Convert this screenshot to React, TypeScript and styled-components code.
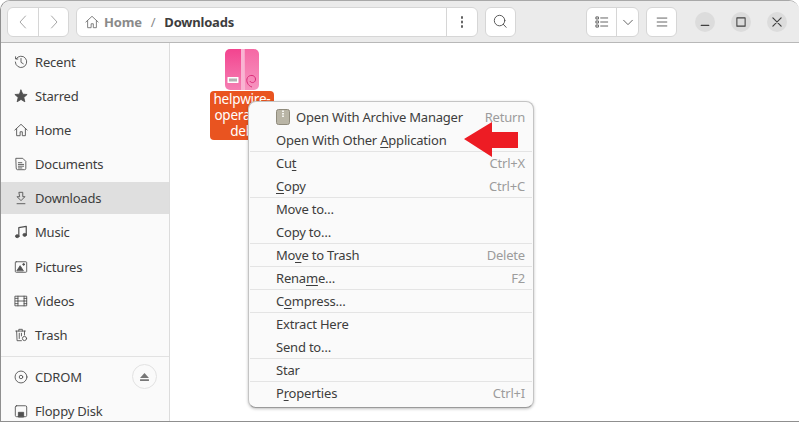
import React from 'react';
import styled, { createGlobalStyle } from 'styled-components';

const GlobalStyle = createGlobalStyle`
  html, body {
    margin: 0;
    padding: 0;
    background: #fff;
    overflow: hidden;
  }
  * {
    box-sizing: border-box;
  }
`;

const stroke = { fill: 'none', stroke: 'currentColor', strokeWidth: 1, strokeLinecap: 'round', strokeLinejoin: 'round' } as const;

const Icon = ({ size = 16, children }: { size?: number; children: React.ReactNode }) => (
  <svg width={size} height={size} viewBox="0 0 16 16" {...stroke}>
    {children}
  </svg>
);

const HomeIcon = () => (
  <Icon size={14}>
    <path d="M1 8 8 1.5 15 8M3 6.5V14.5H7V10H9.5V14.5H13V6.5" />
  </Icon>
);

const icons: Record<string, React.ReactNode> = {
  recent: (
    <Icon size={14}>
      <path d="M2.6 4.2A6.5 6.5 0 1 1 1.5 8M1.8 2v2.6h2.6M8 4v4.4l2.6 1.6" />
    </Icon>
  ),
  star: (
    <Icon size={14}>
      <path d="M8 1.2 10 5.9 15 6.3 11.2 9.6 12.4 14.6 8 11.9 3.6 14.6 4.8 9.6 1 6.3 6 5.9Z" fill="currentColor" />
    </Icon>
  ),
  home: <HomeIcon />,
  documents: (
    <Icon size={14}>
      <path d="M2.5 1.5H10L13.5 5V13A1.5 1.5 0 0 1 12 14.5H4A1.5 1.5 0 0 1 2.5 13ZM5 6.5H9M5 8.5H11M5 10.5H11M5 12.5H9" />
    </Icon>
  ),
  downloads: (
    <Icon size={14}>
      <path d="M6 1.5H10V6.5H12.5L8 11 3.5 6.5H6ZM3.5 14.5H12.5" />
    </Icon>
  ),
  music: (
    <Icon size={14}>
      <path d="M5.5 12.5V3L14 1.5V11" strokeWidth={1.4} />
      <ellipse cx="3.7" cy="12.8" rx="2" ry="1.7" fill="currentColor" />
      <ellipse cx="12.2" cy="11.3" rx="2" ry="1.7" fill="currentColor" />
    </Icon>
  ),
  pictures: (
    <Icon size={14}>
      <rect x="1.5" y="2" width="13" height="12" rx="1" />
      <path d="M3.5 12 7 6.5 10.5 12Z" fill="currentColor" />
      <circle cx="11" cy="5" r="1" fill="currentColor" />
    </Icon>
  ),
  videos: (
    <Icon size={14}>
      <rect x="1.5" y="2.5" width="13" height="11" />
      <path d="M4.5 2.5V13.5M11.5 2.5V13.5M4.5 8H11.5M1.5 5H4.5M1.5 8H4.5M1.5 11H4.5M11.5 5H14.5M11.5 8H14.5M11.5 11H14.5" />
    </Icon>
  ),
  trash: (
    <Icon size={14}>
      <path d="M2 3.5H13M5.5 3.5V1.5H9.5V3.5M3 3.5 3.5 14.5H8.5M12 3.5V8M6 6V12M8.5 6V9" />
      <circle cx="12" cy="12" r="2.4" />
    </Icon>
  ),
  cdrom: (
    <Icon size={14}>
      <circle cx="8" cy="8" r="6.8" />
      <circle cx="8" cy="8" r="2" />
    </Icon>
  ),
  floppy: (
    <Icon size={14}>
      <path d="M3 2H13A1.5 1.5 0 0 1 14.5 3.5V13A1.5 1.5 0 0 1 13 14.5H3A1.5 1.5 0 0 1 1.5 13V3.5A1.5 1.5 0 0 1 3 2Z" />
      <path d="M5 14.5V9.5H11V14.5Z" fill="currentColor" />
    </Icon>
  ),
};

const places = [
  { key: 'recent', label: 'Recent' },
  { key: 'star', label: 'Starred' },
  { key: 'home', label: 'Home' },
  { key: 'documents', label: 'Documents' },
  { key: 'downloads', label: 'Downloads', active: true },
  { key: 'music', label: 'Music' },
  { key: 'pictures', label: 'Pictures' },
  { key: 'videos', label: 'Videos' },
  { key: 'trash', label: 'Trash' },
];

type MenuEntry = { label: React.ReactNode; hint?: string; sep?: boolean; icon?: boolean };

const menu: MenuEntry[] = [
  { label: 'Open With Archive Manager', hint: 'Return', icon: true },
  { label: <>Open With Other <u>A</u>pplication</> },
  { label: <>Cu<u>t</u></>, hint: 'Ctrl+X', sep: true },
  { label: <><u>C</u>opy</>, hint: 'Ctrl+C' },
  { label: 'Move to…', sep: true },
  { label: 'Copy to…' },
  { label: <>Mo<u>v</u>e to Trash</>, hint: 'Delete', sep: true },
  { label: <>Rena<u>m</u>e…</>, hint: 'F2', sep: true },
  { label: <>C<u>o</u>mpress…</>, sep: true },
  { label: 'Extract Here', sep: true },
  { label: 'Send to…' },
  { label: 'Star', sep: true },
  { label: <>P<u>r</u>operties</>, hint: 'Ctrl+I', sep: true },
];

export default function App() {
  return (
    <Window>
      <GlobalStyle />
      <HeaderBar>
        <ButtonGroup>
          <ToolButton $width={30} $muted>
            <Icon>
              <path d="M10.5 2 5 8 10.5 14" />
            </Icon>
          </ToolButton>
          <ToolButton $width={30} $muted>
            <Icon>
              <path d="M5.5 2 11 8 5.5 14" />
            </Icon>
          </ToolButton>
        </ButtonGroup>
        <PathBar>
          <Crumbs>
            <CrumbIcon>
              <HomeIcon />
            </CrumbIcon>
            <Crumb>Home</Crumb>
            <CrumbSlash>/</CrumbSlash>
            <Crumb $current>Downloads</Crumb>
          </Crumbs>
          <ToolButton $width={30}>
            <Icon>
              <path d="M8 3V4M8 7.5V8.5M8 12V13" strokeWidth={1.8} />
            </Icon>
          </ToolButton>
        </PathBar>
        <ButtonGroup>
          <ToolButton $width={29}>
            <Icon size={15}>
              <circle cx="7" cy="7" r="5.6" />
              <path d="M11 11 14 14.2" />
            </Icon>
          </ToolButton>
        </ButtonGroup>
        <Spacer />
        <ButtonGroup>
          <ToolButton $width={29}>
            <Icon size={14}>
              <rect x="1.5" y="2.2" width="2.4" height="2.4" />
              <rect x="1.5" y="6.8" width="2.4" height="2.4" />
              <rect x="1.5" y="11.4" width="2.4" height="2.4" />
              <path d="M6.5 3.4H14.5M6.5 8H14.5M6.5 12.6H14.5" />
            </Icon>
          </ToolButton>
          <ToolButton $width={22}>
            <Icon size={14}>
              <path d="M3 6 8 11 13 6" />
            </Icon>
          </ToolButton>
        </ButtonGroup>
        <ButtonGroup>
          <ToolButton $width={29}>
            <Icon size={14}>
              <path d="M2.5 3.5H13.5M2.5 8H13.5M2.5 12.5H13.5" />
            </Icon>
          </ToolButton>
        </ButtonGroup>
        <WindowControls>
          <WindowButton>
            <Icon size={12}>
              <path d="M3 12.5H13" strokeWidth={1.6} />
            </Icon>
          </WindowButton>
          <WindowButton>
            <Icon size={12}>
              <rect x="2.5" y="2.5" width="11" height="11" strokeWidth={1.4} />
            </Icon>
          </WindowButton>
          <WindowButton>
            <Icon size={12}>
              <path d="M2.5 2.5 13.5 13.5M13.5 2.5 2.5 13.5" strokeWidth={1.6} />
            </Icon>
          </WindowButton>
        </WindowControls>
      </HeaderBar>

      <Body>
        <Sidebar>
          <PlaceList>
            {places.map((place) => (
              <PlaceRow key={place.key} $active={place.active}>
                <PlaceIcon>{icons[place.key]}</PlaceIcon>
                {place.label}
              </PlaceRow>
            ))}
          </PlaceList>
          <SideDivider />
          <PlaceList>
            <PlaceRow>
              <PlaceIcon>{icons.cdrom}</PlaceIcon>
              CDROM
              <EjectButton>
                <svg width="9" height="8" viewBox="0 0 10 9">
                  <path d="M5 0 10 5.5H0ZM0 7H10V9H0Z" fill="currentColor" />
                </svg>
              </EjectButton>
            </PlaceRow>
            <PlaceRow>
              <PlaceIcon>{icons.floppy}</PlaceIcon>
              Floppy Disk
            </PlaceRow>
          </PlaceList>
        </Sidebar>

        <Files>
          <FileItem>
            <svg width="34" height="41" viewBox="0 0 34 41">
              <defs>
                <linearGradient id="pkgLeft" x1="0" y1="0" x2="0" y2="1">
                  <stop offset="0" stopColor="#f3448f" />
                  <stop offset="1" stopColor="#f57fb3" />
                </linearGradient>
                <linearGradient id="pkgRight" x1="0" y1="0" x2="0" y2="1">
                  <stop offset="0" stopColor="#f568a4" />
                  <stop offset="1" stopColor="#f795c0" />
                </linearGradient>
                <clipPath id="pkgShape">
                  <rect width="34" height="41" rx="5" />
                </clipPath>
              </defs>
              <g clipPath="url(#pkgShape)">
                <rect width="16" height="41" fill="url(#pkgLeft)" />
                <rect x="16" width="3.5" height="41" fill="#f9b4d2" />
                <rect x="19.5" width="14.5" height="41" fill="url(#pkgRight)" />
              </g>
              <rect x="2.5" y="28" width="11" height="6" rx="0.5" fill="#fff" />
              <path d="M5 29.5V32.5M7 29.5V32.5M9 29.5V32.5M11 29.5V32.5" stroke="#666" strokeWidth="1" />
              <path d="M27 38C23 37 20.5 32 22.5 28.5 24.5 25.5 30 25.5 30.5 30 30.8 33.5 26.5 35 24.8 32" fill="none" stroke="#d92c78" strokeWidth="1" />
            </svg>
            <FileLabel>
              helpwire-
              <br />
              operator.
              <br />
              deb
            </FileLabel>
          </FileItem>
        </Files>
      </Body>

      <ContextMenu>
        {menu.map((entry, i) => (
          <MenuRow key={i} $sep={entry.sep}>
            {entry.icon && (
              <MenuIcon>
                <svg width="14" height="16" viewBox="0 0 14 16">
                  <rect x="0.5" y="0.5" width="13" height="15" rx="2" fill="#b9b5a6" stroke="#8f8b7c" />
                  <path d="M7 1.5V8" stroke="#f4f3ee" strokeWidth="2" strokeDasharray="1.5 1" />
                </svg>
              </MenuIcon>
            )}
            <span>{entry.label}</span>
            {entry.hint && <MenuHint>{entry.hint}</MenuHint>}
          </MenuRow>
        ))}
      </ContextMenu>

      <RedArrow width="56" height="37" viewBox="0 0 56 37">
        <path d="M0 18 28 1V11H54V27H28V36Z" fill="#ed1c24" />
      </RedArrow>
    </Window>
  );
}

const Window = styled.div`
  position: relative;
  width: 799px;
  height: 422px;
  display: flex;
  flex-direction: column;
  border-top: 1px solid #a8a8a8;
  border-left: 1px solid #8f8f8f;
  border-bottom: 1px solid #8f8f8f;
  border-top-left-radius: 10px;
  border-top-right-radius: 10px;
  overflow: hidden;
  font-family: 'Noto Sans', 'Open Sans', sans-serif;
  font-size: 13px;
  letter-spacing: -0.2px;
  color: #3d3d3d;
  background: #fff;
`;

const HeaderBar = styled.header`
  flex: none;
  height: 42px;
  display: flex;
  align-items: center;
  gap: 7px;
  padding: 0 12px 0 6px;
  background: #ebebeb;
  border-bottom: 1px solid #b8b8b8;
`;

const ButtonGroup = styled.div`
  flex: none;
  height: 30px;
  display: flex;
  background: #fff;
  border: 1px solid #d6d6d6;
  border-radius: 6px;
  overflow: hidden;
`;

const ToolButton = styled.div<{ $width: number; $muted?: boolean }>`
  width: ${(p) => p.$width}px;
  display: flex;
  align-items: center;
  justify-content: center;
  color: ${(p) => (p.$muted ? '#a6a6a6' : '#505050')};
  & + & {
    border-left: 1px solid #d6d6d6;
  }
`;

const PathBar = styled(ButtonGroup)`
  width: 402px;
`;

const Crumbs = styled.div`
  flex: 1;
  display: flex;
  align-items: center;
  padding-left: 8px;
  border-right: 1px solid #d6d6d6;
  font-weight: 700;
`;

const CrumbIcon = styled.span`
  display: flex;
  color: #707070;
  margin-right: 5px;
`;

const Crumb = styled.span<{ $current?: boolean }>`
  color: ${(p) => (p.$current ? '#3d3d3d' : '#8a8a8a')};
`;

const CrumbSlash = styled.span`
  color: #8a8a8a;
  font-weight: 400;
  margin: 0 9px;
`;

const Spacer = styled.div`
  flex: 1;
`;

const WindowControls = styled.div`
  display: flex;
  gap: 16px;
  margin-left: 11px;
`;

const WindowButton = styled.div`
  width: 20px;
  height: 20px;
  display: flex;
  align-items: center;
  justify-content: center;
  border-radius: 50%;
  background: #dcdcdc;
  color: #404040;
`;

const Body = styled.div`
  flex: 1;
  min-height: 0;
  display: flex;
`;

const Sidebar = styled.nav`
  flex: none;
  width: 169px;
  padding-top: 3px;
  background: #fafafa;
  border-right: 1px solid #dcdcdc;
`;

const PlaceList = styled.div`
  display: flex;
  flex-direction: column;
  gap: 2.1px;
`;

const PlaceRow = styled.div<{ $active?: boolean }>`
  height: 32px;
  display: flex;
  align-items: center;
  gap: 7px;
  padding: 0 13px;
  background: ${(p) => (p.$active ? '#dfdfdf' : 'transparent')};
`;

const PlaceIcon = styled.span`
  display: flex;
  color: #505050;
`;

const SideDivider = styled.div`
  height: 1px;
  margin: 5px 0 4px;
  background: #e2e2e2;
`;

const EjectButton = styled.span`
  width: 25px;
  height: 25px;
  margin-left: auto;
  margin-right: -1px;
  display: flex;
  align-items: center;
  justify-content: center;
  border: 1px solid #e2e2e2;
  border-radius: 50%;
  color: #777;
`;

const Files = styled.main`
  flex: 1;
  padding: 6px 0 0 40px;
`;

const FileItem = styled.div`
  width: 64px;
  display: flex;
  flex-direction: column;
  align-items: center;
  gap: 1px;
`;

const FileLabel = styled.div`
  width: 64px;
  height: 49px;
  border-radius: 4px;
  background: #e95420;
  color: #fff;
  font-size: 13.5px;
  line-height: 16px;
  text-align: center;
  white-space: nowrap;
`;

const ContextMenu = styled.div`
  position: absolute;
  left: 247px;
  top: 100px;
  width: 286px;
  height: 307px;
  padding: 3px 1px;
  background: #fafafa;
  border: 1px solid #c4c4c4;
  border-bottom-color: #9a9a9a;
  border-radius: 8px;
  box-shadow: 0 1px 3px rgba(0, 0, 0, 0.25);
`;

const MenuRow = styled.div<{ $sep?: boolean }>`
  height: 23px;
  display: flex;
  align-items: center;
  padding: 0 7px 0 26px;
  box-shadow: ${(p) => (p.$sep ? 'inset 0 1px 0 #e4e4e4' : 'none')};
  u {
    text-underline-offset: 2px;
  }
`;

const MenuIcon = styled.span`
  display: flex;
  margin-right: 6px;
`;

const MenuHint = styled.span`
  margin-left: auto;
  color: #9c9c9c;
`;

const RedArrow = styled.svg`
  position: absolute;
  left: 463px;
  top: 120px;
`;
